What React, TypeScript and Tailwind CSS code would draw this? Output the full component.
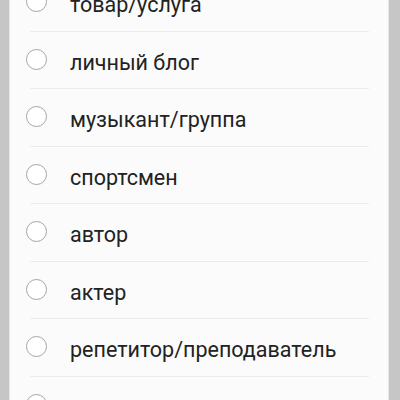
import React from "react";

const items = [
  "товар/услуга",
  "личный блог",
  "музыкант/группа",
  "спортсмен",
  "автор",
  "актер",
  "репетитор/преподаватель",
  "художник",
];

export default function App() {
  return (
    <div className="w-[400px] h-[400px] overflow-hidden bg-[#c6c6c6] flex" style={{ fontFamily: "Roboto, 'Noto Sans', sans-serif" }}>
      <div className="ml-[9px] w-[380px] h-full bg-[#fbfbfb] border-l border-r border-[#e6e6e6] overflow-hidden">
        <div className="mt-[-26px] flex flex-col">
          {items.map((t) => (
            <div key={t} className="relative h-[57.5px] flex items-center shrink-0">
              <div className="ml-[16px] mt-[-2px] w-[21px] h-[21px] rounded-full border-[1.5px] border-[#a4a4a4] bg-white" />
              <span className="ml-[23px] mt-[4px] text-[21.5px] text-[#222222] leading-none">{t}</span>
              <div className="absolute bottom-0 left-[20px] right-[19px] h-px bg-[#ececec]" />
            </div>
          ))}
        </div>
      </div>
    </div>
  );
}
